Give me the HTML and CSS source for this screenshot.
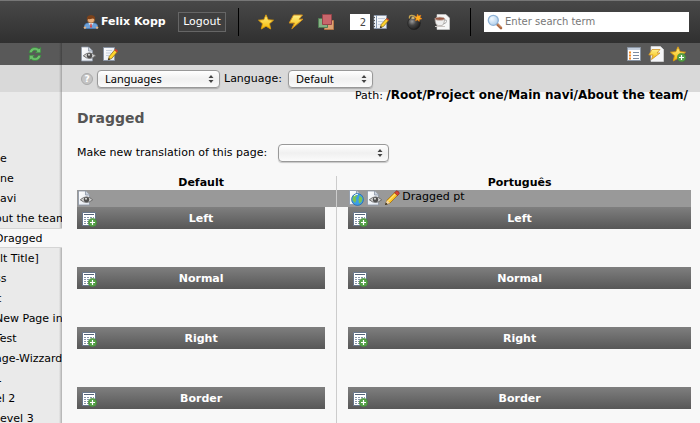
FILE: index.html
```html
<!DOCTYPE html>
<html lang="en">
<head>
<meta charset="utf-8">
<title>Dragged</title>
<link rel="stylesheet" href="styles.css">
</head>
<body>
<svg class="sprite" aria-hidden="true">
  <defs>
    <linearGradient id="gold" x1="0" y1="0" x2="0" y2="1"><stop offset="0" stop-color="#fff08a"/><stop offset="1" stop-color="#f5b800"/></linearGradient>
    <linearGradient id="paper" x1="0" y1="0" x2="1" y2="1"><stop offset="0" stop-color="#fff"/><stop offset="1" stop-color="#dfe5ee"/></linearGradient>
    <radialGradient id="ball" cx=".35" cy=".35" r=".7"><stop offset="0" stop-color="#9a9a9a"/><stop offset=".45" stop-color="#444"/><stop offset="1" stop-color="#1b1b1b"/></radialGradient>
    <radialGradient id="glass" cx=".35" cy=".35" r=".8"><stop offset="0" stop-color="#f4faff"/><stop offset="1" stop-color="#a5c8e8"/></radialGradient>
  </defs>
  <symbol id="user" viewBox="0 0 16 16">
    <path d="M1.500 14.500V11.500Q2 9 5.500 9H10.500Q14 9 14.500 11.500V14.500Z" fill="#6ea1d8" stroke="#4c7fba" stroke-width=".7"/>
    <path d="M5.500 9h5L8 13Z" fill="#dceafa"/><path d="M7.400 10h1.200l.5 3.500h-2.200Z" fill="#c44"/>
    <circle cx="1.900" cy="13.600" r="1.200" fill="#e9b27e"/><circle cx="14.100" cy="13.600" r="1.200" fill="#e9b27e"/>
    <circle cx="8" cy="5.500" r="3.600" fill="#e9b07c" stroke="#96592c" stroke-width=".6"/>
    <path d="M4 6.300Q3 1.300 8 1.200T12 6.300Q11.500 4.800 9.800 4.500 6.200 5.500 5.200 4.900Z" fill="#7c4119"/>
  </symbol>
  <symbol id="star" viewBox="0 0 16 16"><path d="M8 .8 10.200 5.700 15.500 6.200 11.500 9.700 12.700 15 8 12.200 3.300 15 4.500 9.700.5 6.200 5.800 5.700Z" fill="url(#gold)" stroke="#d99a0b" stroke-width=".9" stroke-linejoin="round"/></symbol>
  <symbol id="flash" viewBox="0 0 16 16"><path d="M5.500 1H14.500L11 5.200H15L3.800 14.800 6.500 9H1.200Z" fill="url(#gold)" stroke="#d08e1c" stroke-linejoin="round"/></symbol>
  <symbol id="layers" viewBox="0 0 16 16">
    <path d="M6.500 6.500h9v9h-9z" fill="#dda273" stroke="#b77747"/><path d="M.5 4.500h9v9h-9z" fill="#86b184" stroke="#517e54"/><path d="M4.500.5h9v10h-9z" fill="#c9666b" stroke="#96454a"/>
  </symbol>
  <symbol id="edit" viewBox="0 0 16 16">
    <path d="M1.500 1.500h11v13h-11z" fill="url(#paper)" stroke="#8993a3"/><path d="M4 4.500h6M4 7h5M4 9.500h3" stroke="#c6cfdb"/>
    <path d="M6.300 13.700 7.300 10.300 13 3.500 15.500 5.700 9.700 12.500Z" fill="#ffd42c" stroke="#795c17" stroke-width=".7"/>
    <path d="M12.400 4.200 13.600 2.800 16 4.900 14.800 6.400Z" fill="#c94232"/><path d="M6 14.200 6.800 11.900 8.300 13.200Z" fill="#222"/>
  </symbol>
  <symbol id="notebook" viewBox="0 0 16 16">
    <path d="M1 1.500h12.500v13H1z" fill="url(#paper)" stroke="#8b9ab0" stroke-width=".7"/><path d="M3.500 1v14" stroke="#8395ad"/><path d="M5 4.500h7M5 7.500h5M5 10.500h3" stroke="#c3cedd"/><path d="M0 3.500h2M0 6.500h2M0 9.500h2M0 12.500h2" stroke="#555"/>
    <path d="M7.300 13.700 8.200 10.500 13.500 4.500 15.600 6.500 10.400 12.500Z" fill="#ffd42c" stroke="#795c17" stroke-width=".7"/>
    <path d="M13 5 14 3.900 16 5.700 15.100 6.900Z" fill="#c94232"/><path d="M7 14.200 7.700 12 9.200 13.200Z" fill="#222"/>
  </symbol>
  <symbol id="bomb" viewBox="0 0 16 16">
    <circle cx="8" cy="9.300" r="6.300" fill="url(#ball)" stroke="#1c1c1c" stroke-width=".6"/><path d="M3.500 4.500Q3 1 6 1.400T9.500 3" fill="none" stroke="#c5a451" stroke-width="1.400"/><path d="M5.500 2.500h3v2.500h-3z" fill="#c7b37a"/>
    <path d="m11.500 0 1 2 2.500-.8-1 2.300 2 1.300-2.500.7-.2 2-1.800-1.500-2 .7.700-2.200-1.700-1.500 2.300-.3Z" fill="#ffb01f" stroke="#ef7a14" stroke-width=".5"/>
  </symbol>
  <symbol id="cup" viewBox="0 0 16 16">
    <path d="M3 .5h9l3.500 3.500v11.500H3z" fill="#f7f7f7" stroke="#d4d4d4" stroke-width=".6"/>
    <path d="M1 4.500h9.500q0 7-3.300 7.200H4.500Q1 11 1 4.500Z" fill="#eee" stroke="#9f9690" stroke-width=".7"/><path d="M10.300 6q2.700-.7 2.200 1.500T9.500 9.800" fill="none" stroke="#aaa"/>
    <ellipse cx="5.800" cy="4.700" rx="4.700" ry="1.600" fill="#9b5a45" stroke="#c4b9b3" stroke-width=".7"/><path d="M1 12.500h10" stroke="#c9c5c2"/>
  </symbol>
  <symbol id="search" viewBox="0 0 16 16">
    <path d="m9.500 9.500 4.500 4.500" stroke="#a9643d" stroke-width="2.600" stroke-linecap="round"/><path d="m10.500 9.800 3.700 3.700" stroke="#e3a47a" stroke-width=".8"/>
    <circle cx="6.300" cy="6.300" r="5" fill="url(#glass)" stroke="#8fb2d6" stroke-width="1.300"/>
  </symbol>
  <symbol id="refresh" viewBox="0 0 16 16">
    <g fill="#6cc06b" stroke="#38853d" stroke-width=".7" stroke-linejoin="round"><path d="M2 6.700Q3.200 1.500 8 1.500 10.500 1.500 12 3L13.700 1.300V6.800H8.300L10.100 5Q6.500 2.700 4.800 6.700Z"/><path d="M14 9.300Q12.800 14.500 8 14.500 5.500 14.500 4 13L2.300 14.700V9.200H7.700L5.900 11Q9.500 13.300 11.200 9.300Z"/></g>
  </symbol>
  <symbol id="preview" viewBox="0 0 16 16">
    <path d="M1.500 1h7l4 4v10h-11z" fill="url(#paper)" stroke="#8b95a5" stroke-width=".8"/><path d="M8.500 1v4h4" fill="#cbd3df" stroke="#8b95a5" stroke-width=".8"/>
    <path d="M3.300 9.800Q9.500 4 15.800 9.800 9.500 15 3.300 9.800Z" fill="#d0d0d0" stroke="#707070"/><circle cx="9.500" cy="9.600" r="2.700" fill="#505050"/><circle cx="9" cy="8.800" r="1" fill="#ddd"/>
  </symbol>
  <symbol id="list" viewBox="0 0 16 16">
    <path d="M1.500 1.500h13v13h-13z" fill="#fff" stroke="#8994a3"/><path d="M2 2h12v2H2z" fill="#c3cddb"/>
    <path d="M3 5.500h2v2H3zM3 8.500h2v2H3zM3 11.500h2v2H3z" fill="#f48a24"/><path d="M7 6.500h6M7 9.500h6M7 12.500h6" stroke="#7e8da2"/>
  </symbol>
  <symbol id="pageflash" viewBox="0 0 16 16"><path d="M3 .5h9.500l3 3v12H3z" fill="#f5f6f8" stroke="#dcdcdc" stroke-width=".7"/><path d="M4 3.500H12L9 7H12L3.500 13.500 5 9H.8Z" fill="url(#gold)" stroke="#cf9327" stroke-width=".8"/></symbol>
  <symbol id="plus" viewBox="0 0 9 9"><circle cx="4.500" cy="4.500" r="4.300" fill="#55a047" stroke="#3b7d31" stroke-width=".4"/><path d="M4.500 2v5M2 4.500h5" stroke="#fff" stroke-width="1.200"/></symbol>
  <symbol id="staradd" viewBox="0 0 16 16"><use href="#star"/><use href="#plus" x="7" y="7" width="9" height="9"/></symbol>
  <symbol id="add" viewBox="0 0 16 16">
    <path d="M1.500 1.500h13v13h-13z" fill="#fff" stroke="#66758a"/><path d="M3 3.500h10" stroke="#55647a"/><path d="M3 6.500h10M3 8.500h10M3 10.500h10M3 12.500h10" stroke="#8595aa" stroke-dasharray="2 1"/>
    <use href="#plus" x="7" y="7" width="9" height="9"/>
  </symbol>
  <symbol id="globe" viewBox="0 0 16 16">
    <path d="M1.500.5h7l4 4v10h-11z" fill="url(#paper)" stroke="#8b95a5" stroke-width=".8"/><path d="M8.500.5v4h4" fill="#cbd3df" stroke="#8b95a5" stroke-width=".8"/>
    <circle cx="9.500" cy="9.500" r="5.900" fill="#3c9fe8" stroke="#2467aa" stroke-width=".8"/><path d="M5 6.500 8.500 4.500 9.500 6 7.500 8 8.500 10 7 13 4.300 10ZM11.500 5.500 14.500 8 13.500 12 11 13.500 10.500 9.500Z" fill="#7bc455"/><path d="M6 6q2-2.200 4-1.600" stroke="#e9f8ff" fill="none"/>
  </symbol>
  <symbol id="pencil" viewBox="0 0 16 16">
    <path d="M1.500 14.500 3 10.200 11 2.200 13.900 5 6 13Z" fill="#ffc928" stroke="#9b681b" stroke-width=".8"/><path d="m4.200 11.200 8-8" stroke="#fff09a"/><path d="M10.500 2.700 12.600.8Q15.300 1.300 15.300 3.700L13.400 5.600Z" fill="#d44334" stroke="#842018" stroke-width=".6"/><path d="M3 10.200 6 13 1.500 14.500Z" fill="#f8dcad"/><path d="M1 15 1.900 12.400 3.700 14.200Z" fill="#222"/>
  </symbol>
  <symbol id="arrows" viewBox="0 0 6 8"><path d="M3 0 5.500 3H.5ZM3 8 .5 5h5Z" fill="#444"/></symbol>
</svg>

<header class="topbar">
  <div class="account">
    <svg class="icon"><use href="#user"/></svg>
    <strong class="username">Felix Kopp</strong>
    <button class="logout" type="button">Logout</button>
  </div>
  <nav class="shortcuts" aria-label="Shortcuts">
    <button class="tool" type="button" aria-label="Favourites"><svg class="icon"><use href="#star"/></svg></button>
    <button class="tool" type="button" aria-label="Clear cache"><svg class="icon"><use href="#flash"/></svg></button>
    <button class="tool" type="button" aria-label="Workspaces"><svg class="icon"><use href="#layers"/></svg></button>
    <div class="quick">
      <input class="page-id" type="text" value="2" aria-label="Page number">
      <button class="tool" type="button" aria-label="Edit page"><svg class="icon"><use href="#notebook"/></svg></button>
    </div>
    <div class="dev">
      <button class="tool" type="button" aria-label="Debug"><svg class="icon"><use href="#bomb"/></svg></button>
      <button class="tool" type="button" aria-label="Break"><svg class="icon"><use href="#cup"/></svg></button>
    </div>
  </nav>
  <label class="search">
    <svg class="icon"><use href="#search"/></svg>
    <input class="search-field" type="text" placeholder="Enter search term" aria-label="Search">
  </label>
</header>

<div class="workspace">
  <aside class="sidebar">
    <div class="toolbar tree-tools"><button class="tool" type="button" aria-label="Refresh"><svg class="icon"><use href="#refresh"/></svg></button></div>
    <div class="subbar"></div>
    <ul class="tree">
      <li><a href="#">e</a></li>
      <li><a href="#">ne</a></li>
      <li><a href="#">avi</a></li>
      <li><a class="cut" href="#">out the team</a></li>
      <li class="current"><a class="cut" href="#">Dragged</a></li>
      <li><a href="#">lt Title]</a></li>
      <li><a class="cut" href="#">ss</a></li>
      <li><a class="cut narrow" href="#">t</a></li>
      <li><a class="cut" href="#">New Page in</a></li>
      <li><a class="cut" href="#">Test</a></li>
      <li><a class="cut" href="#">age-Wizzard</a></li>
      <li><a class="cut" href="#">1</a></li>
      <li><a class="cut" href="#">el 2</a></li>
      <li><a class="cut narrow" href="#">level 3</a></li>
    </ul>
  </aside>

  <main class="content">
    <div class="toolbar">
      <button class="tool" type="button" aria-label="View page"><svg class="icon"><use href="#preview"/></svg></button>
      <button class="tool" type="button" aria-label="Edit properties"><svg class="icon"><use href="#edit"/></svg></button>
      <button class="tool push" type="button" aria-label="List"><svg class="icon"><use href="#list"/></svg></button>
      <button class="tool" type="button" aria-label="Clear page cache"><svg class="icon"><use href="#pageflash"/></svg></button>
      <button class="tool" type="button" aria-label="Add bookmark"><svg class="icon"><use href="#staradd"/></svg></button>
    </div>
    <div class="subbar filters">
      <button class="help" type="button" aria-label="Help">?</button>
      <span class="dropdown mode"><select aria-label="Module"><option>Languages</option></select><svg class="arrows"><use href="#arrows"/></svg></span>
      <label for="language">Language:</label>
      <span class="dropdown language"><select id="language"><option>Default</option></select><svg class="arrows"><use href="#arrows"/></svg></span>
    </div>
    <p class="path">Path: <strong>/Root/Project one/Main navi/About the team/</strong></p>
    <h1>Dragged</h1>
    <div class="translate">
      <label for="translation">Make new translation of this page:</label>
      <span class="dropdown translation"><select id="translation"><option></option></select><svg class="arrows"><use href="#arrows"/></svg></span>
    </div>
    <table class="columns">
      <thead><tr><th>Default</th><th>Português</th></tr></thead>
      <tbody>
        <tr class="records">
          <td><div class="record"><svg class="icon"><use href="#preview"/></svg></div></td>
          <td><div class="record"><svg class="icon"><use href="#globe"/></svg><svg class="icon"><use href="#preview"/></svg><svg class="icon"><use href="#pencil"/></svg><span>Dragged pt</span></div></td>
        </tr>
        <tr class="area"><td><div class="bar"><svg class="icon"><use href="#add"/></svg>Left</div></td><td><div class="bar"><svg class="icon"><use href="#add"/></svg>Left</div></td></tr>
        <tr class="area"><td><div class="bar"><svg class="icon"><use href="#add"/></svg>Normal</div></td><td><div class="bar"><svg class="icon"><use href="#add"/></svg>Normal</div></td></tr>
        <tr class="area"><td><div class="bar"><svg class="icon"><use href="#add"/></svg>Right</div></td><td><div class="bar"><svg class="icon"><use href="#add"/></svg>Right</div></td></tr>
        <tr class="area"><td><div class="bar"><svg class="icon"><use href="#add"/></svg>Border</div></td><td><div class="bar"><svg class="icon"><use href="#add"/></svg>Border</div></td></tr>
      </tbody>
    </table>
  </main>
</div>
</body>
</html>
```
FILE: styles.css
```css
* { box-sizing: border-box; }

html { height: 100%; }

body {
  display: flex;
  flex-direction: column;
  height: 100%;
  margin: 0;
  overflow: hidden;
  background: #f8f8f8;
  color: #000;
  font: 11px/14px Verdana, "DejaVu Sans", sans-serif;
}

button, input, select { font: inherit; }

.sprite { position: absolute; width: 0; height: 0; }

.icon { display: block; flex: none; width: 16px; height: 16px; }

.tool { display: block; padding: 0; border: 0; background: none; }

/* Top bar */
.topbar {
  display: flex;
  flex: none;
  align-items: center;
  height: 43px;
  padding: 0 11px 0 83px;
  border-top: 1px solid #777;
  background: linear-gradient(#484848, #303030);
  color: #fff;
}

.account {
  display: flex;
  align-items: center;
  height: 28px;
  padding-right: 12px;
  border-right: 1px solid #000;
}

.username { width: 77px; margin-left: 2px; white-space: nowrap; }

.logout {
  width: 48px;
  height: 20px;
  padding: 0;
  border: 1px solid #666;
  background: #3f3f3f;
  color: #fff;
}

.shortcuts {
  display: flex;
  align-items: center;
  gap: 14px;
  height: 28px;
  padding: 0 20px 0 19px;
  border-right: 1px solid #000;
}

.quick { display: flex; gap: 3px; margin: 0 3px 0 2px; }

.dev { display: flex; gap: 12px; }

.page-id {
  width: 20px;
  height: 16px;
  padding: 0 4px;
  border: 0;
  background: #fff;
  color: #444;
  font-size: 10px;
  text-align: right;
}

.search {
  display: flex;
  flex: 1;
  align-items: center;
  gap: 2px;
  height: 20px;
  margin-left: 13px;
  padding-left: 3px;
  background: #fff;
}

.search-field {
  flex: 1;
  min-width: 0;
  padding: 0;
  border: 0;
  outline: 0;
  background: none;
  font-size: 10px;
}

.search-field::placeholder { color: #777; }

/* Panels */
.workspace { display: flex; flex: 1; min-height: 0; }

.toolbar {
  display: flex;
  align-items: center;
  gap: 6px;
  height: 22px;
  padding: 0 14px 0 18px;
  background: #595959;
}

.push { margin-left: auto; }

.subbar { height: 27px; background: #d9d9d9; }

.sidebar {
  position: relative;
  flex: none;
  width: 62px;
  overflow: hidden;
  background: #eaeaea;
}

.sidebar::after {
  position: absolute;
  top: 0;
  right: 0;
  bottom: 0;
  width: 3px;
  background: linear-gradient(90deg, transparent, rgba(0, 0, 0, .25));
  content: "";
}

.tree-tools { padding-left: 27px; }

.tree { margin: 0; padding: 56px 0 0; list-style: none; }

.tree li { height: 20px; line-height: 22px; white-space: nowrap; }

.tree a { display: block; color: #000; text-decoration: none; }

.tree .cut { margin-left: -5px; }

.tree .narrow { margin-left: -3px; }

.tree .current {
  position: relative;
  z-index: 1;
  border: 1px solid #d5d5d5;
  border-width: 1px 0;
  background: #f8f8f8;
  line-height: 20px;
}

.content { flex: 1; min-width: 0; overflow: hidden; }

.filters { display: flex; align-items: center; gap: 4px; padding-left: 19px; }

.help {
  width: 12px;
  height: 12px;
  padding: 0;
  border: 1px solid #aaa;
  border-radius: 50%;
  background: #c4c4c4;
  color: #fff;
  font-size: 9px;
  font-weight: bold;
  line-height: 10px;
}

.dropdown { position: relative; display: block; height: 18px; }

.dropdown select {
  display: block;
  width: 100%;
  height: 18px;
  padding: 0 18px 0 7px;
  border: 1px solid #999;
  border-radius: 4px;
  background: linear-gradient(#fff, #f0f0f0 50%, #fbfbfb);
  box-shadow: 0 1px 1px rgba(0, 0, 0, .2);
  color: #000;
  font-family: "Lucida Grande", "Noto Sans", sans-serif;
  appearance: none;
}

.arrows {
  position: absolute;
  top: 5px;
  right: 6px;
  width: 6px;
  height: 8px;
  pointer-events: none;
}

.mode { width: 123px; }
.language { width: 85px; margin-left: 2px; }
.translation { width: 111px; }

.path { margin: -4px 12px 0 0; text-align: right; }

.path strong { font-size: 12px; }

h1 {
  margin: 6px 0 0 15px;
  color: #555;
  font-size: 14px;
  line-height: 18px;
}

.translate { display: flex; align-items: center; gap: 11px; margin: 17px 0 14px 15px; }

/* Language comparison */
.columns {
  width: calc(100% - 24px);
  margin-left: 15px;
  border-collapse: collapse;
  table-layout: fixed;
}

.columns th, .columns td { padding: 0; vertical-align: top; }

.columns th:first-child { width: 42.3%; padding-right: 11px; }

.columns th + th, .columns td + td { padding-left: 11px; border-left: 1px solid #ccc; }

.columns td:first-child { padding-right: 11px; }

.records { background: #999; }

.record { display: flex; gap: 2px; height: 17px; }

.area { height: 60px; }

.bar {
  display: grid;
  grid-template-columns: 16px 1fr 16px;
  align-items: center;
  height: 22px;
  padding: 2px 4px 0;
  background: linear-gradient(#7f7f7f, #575757);
  color: #fff;
  font-weight: bold;
  text-align: center;
}
```
